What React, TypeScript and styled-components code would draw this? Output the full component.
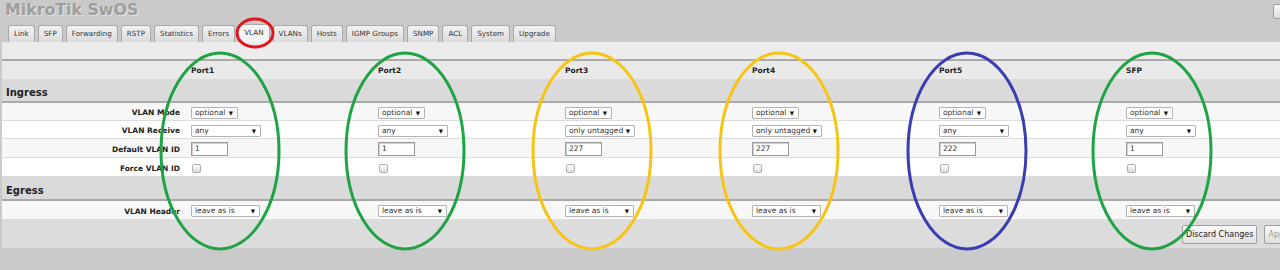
import React from "react";
import styled, { createGlobalStyle } from "styled-components";

const GlobalStyle = createGlobalStyle`
    html, body {
        margin: 0;
        padding: 0;
        background: #cacaca;
        overflow: hidden;
    }
    body {
        font-family: "DejaVu Sans", Verdana, sans-serif;
        color: #222;
    }
`;

const ports = ["Port1", "Port2", "Port3", "Port4", "Port5", "SFP"];
const tabs = ["Link", "SFP", "Forwarding", "RSTP", "Statistics", "Errors", "VLAN", "VLANs", "Hosts", "IGMP Groups", "SNMP", "ACL", "System", "Upgrade"];

const receive = ["any", "any", "only untagged", "only untagged", "any", "any"];
const vlanIds = ["1", "1", "227", "227", "222", "1"];

// annotation rings drawn over the port columns
const rings = [
    { cx: 220, color: "#1fa346" },
    { cx: 405, color: "#1fa346" },
    { cx: 592, color: "#f6c513" },
    { cx: 779, color: "#f6c513" },
    { cx: 967, color: "#3a3cb4" },
    { cx: 1152, color: "#1fa346" },
];

const App = () => {
    return (
        <$Page>
            <GlobalStyle />
            <$TopBar>
                <$Title>MikroTik SwOS</$Title>
                <$CornerButton />
            </$TopBar>
            <$TabBar>
                {tabs.map((t) => (
                    <$Tab key={t} $active={t === "VLAN"}>{t}</$Tab>
                ))}
            </$TabBar>
            <$Panel>
                <$Strip />
                <$Row $kind="head">
                    <div />
                    {ports.map((p) => (
                        <$PortName key={p}>{p}</$PortName>
                    ))}
                </$Row>
                <$Section>Ingress</$Section>
                <$Row $kind="data">
                    <$Label>VLAN Mode</$Label>
                    {ports.map((p) => (
                        <$Cell key={p}><$Select $w={47}>optional<$Arrow>▼</$Arrow></$Select></$Cell>
                    ))}
                </$Row>
                <$Row $kind="data" $alt>
                    <$Label>VLAN Receive</$Label>
                    {receive.map((r, i) => (
                        <$Cell key={i}><$Select $w={70}>{r}<$Arrow>▼</$Arrow></$Select></$Cell>
                    ))}
                </$Row>
                <$Row $kind="data" $tall>
                    <$Label>Default VLAN ID</$Label>
                    {vlanIds.map((v, i) => (
                        <$Cell key={i}><$Input>{v}</$Input></$Cell>
                    ))}
                </$Row>
                <$Row $kind="data" $alt $tall>
                    <$Label>Force VLAN ID</$Label>
                    {ports.map((p) => (
                        <$Cell key={p}><$Check /></$Cell>
                    ))}
                </$Row>
                <$Section>Egress</$Section>
                <$Row $kind="data" $tall>
                    <$Label>VLAN Header</$Label>
                    {ports.map((p) => (
                        <$Cell key={p}><$Select $w={69}>leave as is<$Arrow>▼</$Arrow></$Select></$Cell>
                    ))}
                </$Row>
                <$Footer>
                    <$Button>Discard Changes</$Button>
                    <$Button $cut>Apply</$Button>
                </$Footer>
            </$Panel>
            <$Overlay width="1280" height="270" viewBox="0 0 1280 270">
                <ellipse cx="255" cy="33" rx="18" ry="14" fill="none" stroke="#e3161f" strokeWidth="3" />
                {rings.map((r) => (
                    <ellipse key={r.cx} cx={r.cx} cy="151" rx="59" ry="98" fill="none" stroke={r.color} strokeWidth="3" />
                ))}
            </$Overlay>
        </$Page>
    );
};

const $Page = styled.div`
    position: relative;
    width: 1280px;
    height: 270px;
    overflow: hidden;
`;

const $TopBar = styled.div`
    display: flex;
    justify-content: space-between;
    align-items: flex-start;
    height: 24px;
    padding-left: 5px;
`;

const $Title = styled.div`
    font-size: 15.8px;
    font-weight: bold;
    color: #9e9e9e;
    text-shadow: 1px 1px 0 #e2e2e2;
    line-height: 20px;
`;

const $CornerButton = styled.div`
    width: 14px;
    height: 13px;
    margin-top: 4px;
    margin-right: -9px;
    border: 1px solid #a0a0a0;
    border-radius: 2px;
    background: linear-gradient(#fafafa, #dedede);
`;

const $TabBar = styled.div`
    display: flex;
    align-items: flex-end;
    gap: 3px;
    padding-left: 8px;
    height: 18px;
`;

const $Tab = styled.div<{ $active?: boolean }>`
    height: ${(p) => (p.$active ? 18 : 17)}px;
    box-sizing: border-box;
    padding: 0 5px;
    font-size: 7.2px;
    line-height: 16px;
    color: #333;
    border: 1px solid #a9a9a9;
    border-bottom: none;
    border-radius: 3px 3px 0 0;
    background: ${(p) => (p.$active ? "#f4f4f4" : "linear-gradient(#f2f2f2, #dcdcdc)")};
`;

const $Panel = styled.div`
    margin-left: 2px;
    background: #dcdcdc;
`;

const $Strip = styled.div`
    height: 17px;
    background: #ececec;
    border-bottom: 2px solid #a9a9a9;
`;

const $Row = styled.div<{ $kind: "head" | "data"; $alt?: boolean; $tall?: boolean }>`
    display: grid;
    grid-template-columns: 187px repeat(5, 187px) 1fr;
    align-items: center;
    height: ${(p) => (p.$kind === "head" ? 18 : p.$tall ? 19 : 18)}px;
    box-sizing: border-box;
    padding-top: ${(p) => (p.$kind === "data" ? 2 : 0)}px;
    background: ${(p) => (p.$kind === "head" ? "#e9e9e9" : p.$alt ? "#ffffff" : "#f7f7f7")};
    border-bottom: ${(p) => (p.$kind === "data" ? "1px solid #dddddd" : "none")};
`;

const $PortName = styled.div`
    font-size: 7.5px;
    font-weight: bold;
    padding-left: 2px;
`;

const $Section = styled.div`
    height: 24px;
    box-sizing: border-box;
    padding: 8px 0 0 4px;
    font-size: 10px;
    font-weight: bold;
    color: #222;
    background: #dadada;
    border-bottom: 2px solid #a9a9a9;
`;

const $Label = styled.div`
    text-align: right;
    padding-right: 9px;
    font-size: 7.5px;
    font-weight: bold;
    color: #222;
`;

const $Cell = styled.div`
    display: flex;
    align-items: center;
    padding-left: 2px;
`;

const $Select = styled.div<{ $w: number }>`
    position: relative;
    width: ${(p) => p.$w}px;
    height: 12px;
    box-sizing: border-box;
    padding-left: 3px;
    border: 1px solid #b4b4b4;
    border-radius: 1px;
    background: #fff;
    font-size: 7.5px;
    line-height: 10px;
    color: #333;
`;

const $Arrow = styled.span`
    position: absolute;
    right: 4px;
    top: 0;
    font-size: 5.5px;
    line-height: 10px;
    color: #111;
`;

const $Input = styled.div`
    width: 37px;
    height: 14px;
    box-sizing: border-box;
    padding-left: 3px;
    border: 1px solid #9a9a9a;
    box-shadow: inset 1px 1px 1px #ccc;
    background: #fff;
    font-size: 7.5px;
    line-height: 12px;
    color: #333;
`;

const $Check = styled.div`
    width: 9px;
    height: 9px;
    margin-left: 1px;
    box-sizing: border-box;
    border: 1px solid #b0b0b0;
    border-radius: 2px;
    background: linear-gradient(#fdfdfd, #dedede);
`;

const $Footer = styled.div`
    display: flex;
    justify-content: flex-end;
    align-items: center;
    gap: 7px;
    height: 28px;
    background: #dcdcdc;
`;

const $Button = styled.div<{ $cut?: boolean }>`
    height: 19px;
    box-sizing: border-box;
    padding: 0 3px;
    margin-right: ${(p) => (p.$cut ? "-15px" : "0")};
    border: 1px solid #a0a0a0;
    border-radius: 2px;
    background: linear-gradient(#fafafa, #e0e0e0);
    font-size: 8px;
    line-height: 17px;
    color: ${(p) => (p.$cut ? "#999" : "#222")};
`;

const $Overlay = styled.svg`
    position: absolute;
    left: 0;
    top: 0;
    pointer-events: none;
`;

export default App;
